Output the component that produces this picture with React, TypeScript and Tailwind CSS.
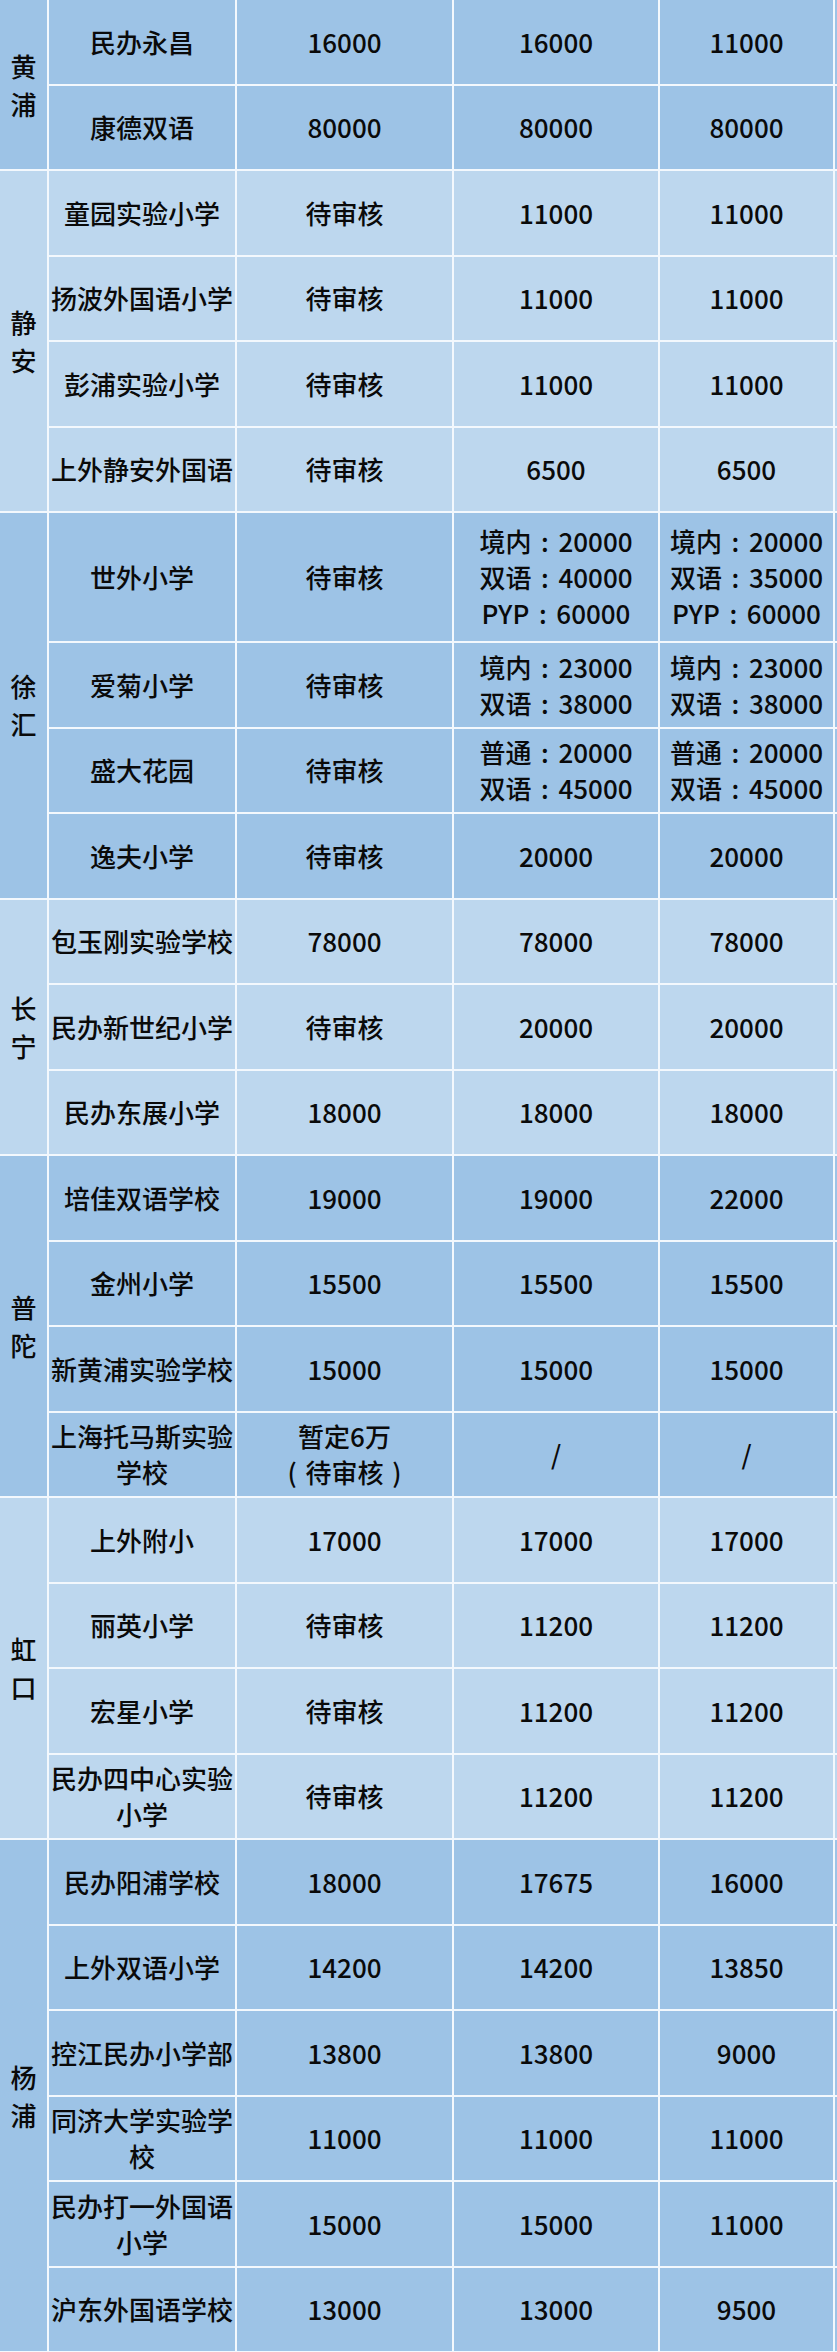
import React from "react";

type Row = {
  name: string[];
  fee: string[];
  y2019: string[];
  y2018: string[];
  tall?: boolean;
};

type Group = {
  district: string;
  dark: boolean;
  rows: Row[];
};

const r = (name: string | string[], fee: string | string[], a: string | string[], b: string | string[], tall = false): Row => ({
  name: Array.isArray(name) ? name : [name],
  fee: Array.isArray(fee) ? fee : [fee],
  y2019: Array.isArray(a) ? a : [a],
  y2018: Array.isArray(b) ? b : [b],
  tall,
});

const groups: Group[] = [
  {
    district: "黄浦",
    dark: true,
    rows: [r("民办永昌", "16000", "16000", "11000"), r("康德双语", "80000", "80000", "80000")],
  },
  {
    district: "静安",
    dark: false,
    rows: [
      r("童园实验小学", "待审核", "11000", "11000"),
      r("扬波外国语小学", "待审核", "11000", "11000"),
      r("彭浦实验小学", "待审核", "11000", "11000"),
      r("上外静安外国语", "待审核", "6500", "6500"),
    ],
  },
  {
    district: "徐汇",
    dark: true,
    rows: [
      r("世外小学", "待审核", ["境内：20000", "双语：40000", "PYP：60000"], ["境内：20000", "双语：35000", "PYP：60000"], true),
      r("爱菊小学", "待审核", ["境内：23000", "双语：38000"], ["境内：23000", "双语：38000"]),
      r("盛大花园", "待审核", ["普通：20000", "双语：45000"], ["普通：20000", "双语：45000"]),
      r("逸夫小学", "待审核", "20000", "20000"),
    ],
  },
  {
    district: "长宁",
    dark: false,
    rows: [
      r("包玉刚实验学校", "78000", "78000", "78000"),
      r("民办新世纪小学", "待审核", "20000", "20000"),
      r("民办东展小学", "18000", "18000", "18000"),
    ],
  },
  {
    district: "普陀",
    dark: true,
    rows: [
      r("培佳双语学校", "19000", "19000", "22000"),
      r("金州小学", "15500", "15500", "15500"),
      r("新黄浦实验学校", "15000", "15000", "15000"),
      r(["上海托马斯实验", "学校"], ["暂定6万", "（待审核）"], "/", "/"),
    ],
  },
  {
    district: "虹口",
    dark: false,
    rows: [
      r("上外附小", "17000", "17000", "17000"),
      r("丽英小学", "待审核", "11200", "11200"),
      r("宏星小学", "待审核", "11200", "11200"),
      r(["民办四中心实验", "小学"], "待审核", "11200", "11200"),
    ],
  },
  {
    district: "杨浦",
    dark: true,
    rows: [
      r("民办阳浦学校", "18000", "17675", "16000"),
      r("上外双语小学", "14200", "14200", "13850"),
      r("控江民办小学部", "13800", "13800", "9000"),
      r(["同济大学实验学", "校"], "11000", "11000", "11000"),
      r(["民办打一外国语", "小学"], "15000", "15000", "11000"),
      r("沪东外国语学校", "13000", "13000", "9500"),
    ],
  },
];

// full-width punctuation drawn centred, like the source sheet
const Line = ({ text }: { text: string }) => {
  const parts = text.split(/([：（）])/);
  return (
    <>
      {parts.map((p, i) =>
        p === "：" ? (
          <span key={i} className="inline-block w-[27px] text-center">:</span>
        ) : p === "（" ? (
          <span key={i} className="inline-block w-[18px] text-left">(</span>
        ) : p === "）" ? (
          <span key={i} className="inline-block w-[18px] text-right">)</span>
        ) : (
          <span key={i}>{p}</span>
        )
      )}
    </>
  );
};

const Cell = ({ lines }: { lines: string[] }) => (
  <div className="flex flex-col items-center justify-center border-r-2 border-[#f3f8fd] text-center">
    {lines.map((line, i) => (
      <div key={i} className="leading-[36px] whitespace-nowrap">
        <Line text={line} />
      </div>
    ))}
  </div>
);

export default function App() {
  return (
    <div
      className="w-[837px] bg-white text-[26px] font-medium text-[#0a0a0a]"
      style={{ fontFamily: '"Noto Sans CJK SC", "Noto Sans", sans-serif' }}
    >
      {groups.map((g) => (
        <div key={g.district} className={`flex ${g.dark ? "bg-[#9dc3e6]" : "bg-[#bdd7ee]"}`}>
          <div className="w-[49px] shrink-0 flex flex-col items-center justify-center border-r-2 border-b-2 border-[#f3f8fd]">
            {g.district.split("").map((ch) => (
              <div key={ch} className="leading-[38px]">
                {ch}
              </div>
            ))}
          </div>
          <div className="flex-1 flex flex-col">
            {g.rows.map((row, i) => (
              <div
                key={i}
                className={`grid grid-cols-[188px_217px_206px_175px_2px] border-b-2 border-[#f3f8fd] ${row.tall ? "h-[130px]" : "h-[85.5px]"}`}
              >
                <Cell lines={row.name} />
                <Cell lines={row.fee} />
                <Cell lines={row.y2019} />
                <Cell lines={row.y2018} />
                <div />
              </div>
            ))}
          </div>
        </div>
      ))}
    </div>
  );
}
